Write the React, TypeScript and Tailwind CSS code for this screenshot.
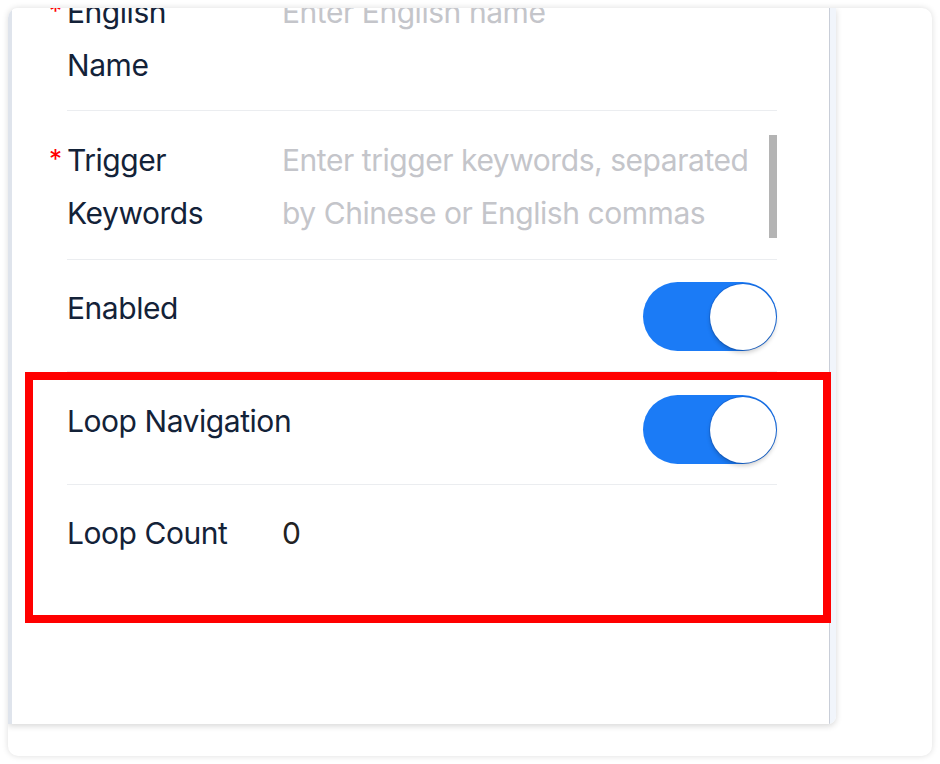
import React from "react";

function Toggle() {
  return (
    <div className="flex h-[69px] w-[134px] flex-none items-center justify-end rounded-full bg-[#1b7bf6] pr-px">
      <div className="h-[66px] w-[66px] rounded-full bg-white shadow-[0_3px_4px_rgba(0,0,0,0.18),0_0_0_1px_rgba(10,60,150,0.25)]" />
    </div>
  );
}

function Label({ children, required }: { children: React.ReactNode; required?: boolean }) {
  return (
    <div className="relative mr-[33px] w-[182px] flex-none">
      {required && (
        <span className="absolute left-[-18px] top-[-2px] text-[26px] leading-[53px] text-[#f00]">*</span>
      )}
      {children}
    </div>
  );
}

export default function App() {
  return (
    <div
      className="relative min-h-screen bg-white p-2 text-[30px] leading-[53px] tracking-[-0.45px] text-[#132238]"
      style={{ fontFamily: "Inter, 'Noto Sans', sans-serif" }}
    >
      <div className="h-[748px] w-[924px] overflow-hidden rounded-[10px] bg-white shadow-[0_0_6px_rgba(0,0,0,0.14)]">
        <div className="flex h-[716px] w-[828px] overflow-hidden rounded-br-[8px] shadow-[0_2px_6px_rgba(0,0,0,0.16)]">
          <div className="w-[4px] flex-none bg-[#dfe4ec]" />
          <div className="flex-1 bg-white pl-[55px] pr-[52px]">
            {/* English name */}
            <div className="mt-[-22px] flex border-b border-[#ebedf0] pb-[18px]">
              <Label required>English Name</Label>
              <div className="flex-1 text-[#c4c5ca]">Enter English name</div>
            </div>

            {/* Trigger keywords */}
            <div className="flex border-b border-[#ebedf0] pb-[19px] pt-[23px]">
              <Label required>Trigger Keywords</Label>
              <div className="relative flex-1 pr-[22px] text-[#c4c5ca]">
                Enter trigger keywords, separated by Chinese or English commas
                <div className="absolute right-0 top-px h-[103px] w-[8px] bg-[#b4b4b4]" />
              </div>
            </div>

            {/* Enabled */}
            <div className="flex items-start justify-between border-b border-[#ebedf0] pb-[20px] pt-[22px]">
              <span>Enabled</span>
              <Toggle />
            </div>

            {/* Loop navigation */}
            <div className="flex items-start justify-between border-b border-[#ebedf0] pb-[20px] pt-[23px]">
              <span>Loop Navigation</span>
              <Toggle />
            </div>

            {/* Loop count */}
            <div className="flex pt-[22px]">
              <Label>Loop Count</Label>
              <div className="flex-1 text-[#222]">0</div>
            </div>
          </div>
          <div className="w-px flex-none bg-[#c9ced8]" />
          <div className="w-[6px] flex-none bg-[#f1f5fb]" />
        </div>
      </div>

      {/* highlight box */}
      <div className="pointer-events-none absolute left-[25px] top-[372px] h-[251px] w-[806px] border-[8px] border-[#ff0000]" />
    </div>
  );
}
